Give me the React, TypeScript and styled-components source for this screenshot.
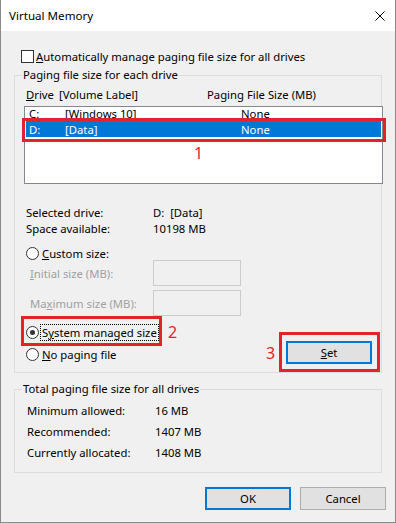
import React from 'react';
import styled, { createGlobalStyle } from 'styled-components';

const GlobalStyle = createGlobalStyle`
  html, body { margin: 0; padding: 0; background: #fff; }
  body {
    font-family: "Noto Sans", "Open Sans", sans-serif;
    font-size: 11.3px;
    color: #000;
  }
  u { text-underline-offset: 1px; }
`;

const Window = styled.div`
  position: relative;
  width: 396px;
  height: 523px;
  box-sizing: border-box;
  border: 1px solid #8a8a8a;
  border-top: none;
  background: #f0f0f0;
  display: flex;
  flex-direction: column;
`;

const TitleBar = styled.div`
  height: 31px;
  flex: none;
  background: #fff;
  display: flex;
  align-items: center;
  justify-content: space-between;
  padding: 0 10px 0 8px;
  font-size: 11.6px;
`;

const Body = styled.div`
  flex: 1;
  display: flex;
  flex-direction: column;
  padding: 0 13px;
`;

const AutoRow = styled.div`
  display: flex;
  align-items: center;
  gap: 2px;
  height: 16px;
  margin-top: 17px;
  padding-left: 7px;
`;

const CheckBox = styled.span`
  width: 13px;
  height: 13px;
  box-sizing: border-box;
  border: 1px solid #333;
  background: #fff;
`;

const Group = styled.div<{ $top: number; $pad: string }>`
  position: relative;
  margin-top: ${p => p.$top}px;
  border: 1px solid #dcdcdc;
  padding: ${p => p.$pad};
`;

const GroupTitle = styled.span`
  position: absolute;
  top: -9px;
  left: 7px;
  padding: 0 1px;
  line-height: 16px;
  background: #f0f0f0;
`;

const Header = styled.div`
  display: grid;
  grid-template-columns: 33px 148px auto;
  height: 16px;
  line-height: 16px;
  padding-left: 2px;
`;

const ListBox = styled.div`
  margin: 3px -2px 0 0;
  height: 78px;
  box-sizing: border-box;
  border: 1px solid #828790;
  background: #fff;
  padding: 0 1px;
`;

const ListRow = styled.div<{ $selected?: boolean }>`
  display: grid;
  grid-template-columns: 36px 176px auto;
  height: 16px;
  box-sizing: border-box;
  padding: 2px 0 0 3px;
  line-height: 14px;
  background: ${p => (p.$selected ? '#0078d7' : 'transparent')};
  color: ${p => (p.$selected ? '#fff' : '#000')};
  &:first-child { margin-top: -2px; }
`;

const InfoGrid = styled.div<{ $top: number; $label: number; $row: number; $left: number }>`
  display: grid;
  grid-template-columns: ${p => p.$label}px auto;
  grid-auto-rows: ${p => p.$row}px;
  align-items: center;
  margin-top: ${p => p.$top}px;
  padding-left: ${p => p.$left}px;
`;

const RadioRow = styled.label<{ $top?: number }>`
  display: flex;
  align-items: center;
  gap: 3px;
  height: 16px;
  margin-top: ${p => p.$top ?? 0}px;
  padding-left: 2px;
`;

const Radio = styled.span<{ $checked?: boolean }>`
  width: 13px;
  height: 13px;
  box-sizing: border-box;
  border: 1px solid #333;
  border-radius: 50%;
  background: #fff;
  display: flex;
  align-items: center;
  justify-content: center;
  &::after {
    content: '';
    width: 5px;
    height: 5px;
    border-radius: 50%;
    background: #333;
    display: ${p => (p.$checked ? 'block' : 'none')};
  }
`;

const Focused = styled.span`
  outline: 1px dotted #000;
  outline-offset: 0;
  padding: 0 1px;
  margin-left: -1px;
`;

const SizeGrid = styled.div`
  display: grid;
  grid-template-columns: 123px 88px;
  grid-auto-rows: 26px;
  row-gap: 4px;
  align-items: center;
  margin-top: -1px;
  padding-left: 6px;
  color: #a0a0a0;
`;

const Field = styled.span`
  height: 26px;
  box-sizing: border-box;
  border: 1px solid #cccccc;
  background: #f0f0f0;
`;

const BottomRow = styled.div`
  display: flex;
  align-items: flex-end;
  justify-content: space-between;
  margin-top: 8px;
`;

const RadioColumn = styled.div`
  display: flex;
  flex-direction: column;
  gap: 6px;
  padding-bottom: 2px;
`;

const Button = styled.button<{ $default?: boolean }>`
  width: 86px;
  height: 23px;
  box-sizing: border-box;
  padding: 0;
  font: inherit;
  color: #000;
  background: #e1e1e1;
  border: ${p => (p.$default ? '2px solid #0078d7' : '1px solid #adadad')};
`;

const SetButton = styled(Button)`
  margin-right: 9px;
`;

const ButtonRow = styled.div`
  display: flex;
  justify-content: flex-end;
  gap: 9px;
  margin: 14px -4px 0 0;
`;

const Mark = styled.div<{ $x: number; $y: number; $w: number; $h: number }>`
  position: absolute;
  left: ${p => p.$x}px;
  top: ${p => p.$y}px;
  width: ${p => p.$w}px;
  height: ${p => p.$h}px;
  box-sizing: border-box;
  border: 3px solid #e3232c;
`;

const Num = styled.span<{ $x: number; $y: number }>`
  position: absolute;
  left: ${p => p.$x}px;
  top: ${p => p.$y}px;
  font-size: 16px;
  line-height: 16px;
  color: #e3232c;
`;

const CloseIcon = () => (
  <svg width="10" height="10" viewBox="0 0 10 10">
    <path d="M0.5 0.5L9.5 9.5M9.5 0.5L0.5 9.5" stroke="#000" strokeWidth="1" fill="none" />
  </svg>
);

const drives = [
  { drive: 'C:', label: '[Windows 10]', size: 'None' },
  { drive: 'D:', label: '[Data]', size: 'None', selected: true },
];

export default function App() {
  return (
    <>
      <GlobalStyle />
      <Window>
        <TitleBar>
          <span>Virtual Memory</span>
          <CloseIcon />
        </TitleBar>
        <Body>
          <AutoRow>
            <CheckBox />
            <span><u>A</u>utomatically manage paging file size for all drives</span>
          </AutoRow>

          <Group $top={11} $pad="11px 0 8px 9px">
            <GroupTitle>Paging file size for each drive</GroupTitle>
            <Header>
              <span><u>D</u>rive</span>
              <span>[Volume Label]</span>
              <span>Paging File Size (MB)</span>
            </Header>
            <ListBox>
              {drives.map(d => (
                <ListRow key={d.drive} $selected={d.selected}>
                  <span>{d.drive}</span>
                  <span>{d.label}</span>
                  <span>{d.size}</span>
                </ListRow>
              ))}
            </ListBox>
            <InfoGrid $top={20} $label={127} $row={16} $left={2}>
              <span>Selected drive:</span>
              <span>D:&nbsp; [Data]</span>
              <span>Space available:</span>
              <span>10198 MB</span>
            </InfoGrid>
            <RadioRow $top={9}>
              <Radio />
              <span><u>C</u>ustom size:</span>
            </RadioRow>
            <SizeGrid>
              <span><u>I</u>nitial size (MB):</span>
              <Field />
              <span>Ma<u>x</u>imum size (MB):</span>
              <Field />
            </SizeGrid>
            <BottomRow>
              <RadioColumn>
                <RadioRow>
                  <Radio $checked />
                  <Focused>S<u>y</u>stem managed size</Focused>
                </RadioRow>
                <RadioRow>
                  <Radio />
                  <span><u>N</u>o paging file</span>
                </RadioRow>
              </RadioColumn>
              <SetButton $default><u>S</u>et</SetButton>
            </BottomRow>
          </Group>

          <Group $top={16} $pad="10px 0 9px 12px">
            <GroupTitle>Total paging file size for all drives</GroupTitle>
            <InfoGrid $top={0} $label={128} $row={21} $left={0}>
              <span>Minimum allowed:</span>
              <span>16 MB</span>
              <span>Recommended:</span>
              <span>1407 MB</span>
              <span>Currently allocated:</span>
              <span>1408 MB</span>
            </InfoGrid>
          </Group>

          <ButtonRow>
            <Button $default>OK</Button>
            <Button>Cancel</Button>
          </ButtonRow>
        </Body>

        <Mark $x={21} $y={118} $w={364} $h={24} />
        <Num $x={193} $y={145}>1</Num>
        <Mark $x={20} $y={316} $w={141} $h={30} />
        <Num $x={167} $y={324}>2</Num>
        <Mark $x={278} $y={332} $w={101} $h={40} />
        <Num $x={265} $y={345}>3</Num>
      </Window>
    </>
  );
}
